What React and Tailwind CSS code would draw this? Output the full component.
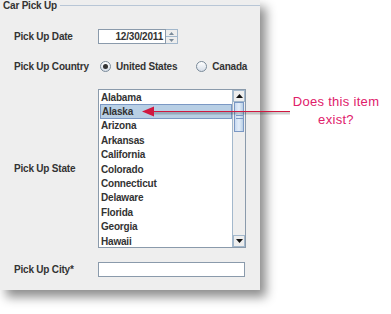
import { useState } from "react";

const states = [
  "Alabama",
  "Alaska",
  "Arizona",
  "Arkansas",
  "California",
  "Colorado",
  "Connecticut",
  "Delaware",
  "Florida",
  "Georgia",
  "Hawaii",
];

function Radio({ checked, label }) {
  return (
    <label className="flex items-center gap-[5px]">
      <span className="w-[11px] h-[11px] rounded-full border border-[#7a8a99] bg-gradient-to-b from-[#ffffff] to-[#d6dee8] flex items-center justify-center">
        {checked && <span className="w-[5px] h-[5px] rounded-full bg-[#333333]" />}
      </span>
      <span>{label}</span>
    </label>
  );
}

function Arrow({ up }) {
  return (
    <div className="h-[12px] flex items-center justify-center border border-[#a3b8cc] bg-[#eeeeee]">
      <svg width="7" height="4" viewBox="0 0 7 4">
        <path d={up ? "M0 4 L3.5 0 L7 4 Z" : "M0 0 L3.5 4 L7 0 Z"} fill="#111" />
      </svg>
    </div>
  );
}

export default function App() {
  const [selected] = useState("Alaska");

  return (
    <div className="relative w-[391px] h-[314px] bg-white overflow-hidden font-['Liberation_Sans',Arial,sans-serif] text-[10px] font-bold tracking-[-0.2px] text-[#333333]">
      <div className="w-[260px] h-[290px] bg-[#eeeeee] shadow-[6px_7px_10px_rgba(0,0,0,0.45)] flex flex-col">
        {/* titled border */}
        <div className="h-[11px] flex items-center pl-[3px] gap-[3px]">
          <span className="text-[#333333]">Car Pick Up</span>
          <div className="flex-1 h-px bg-[#b8c6d6]" />
        </div>

        <div className="pl-[14px] flex flex-col">
          {/* date */}
          <div className="mt-[18px] h-[15px] flex items-center">
            <span className="w-[84px]">Pick Up Date</span>
            <div className="flex h-[15px]">
              <div className="w-[68px] border border-[#8a9aab] bg-white flex items-center justify-end pr-[2px]">
                12/30/2011
              </div>
              <div className="w-[12px] flex flex-col border border-l-0 border-[#a3b8cc]">
                <div className="flex-1 flex items-center justify-center border-b border-[#a3b8cc]">
                  <svg width="5" height="3" viewBox="0 0 5 3"><path d="M0 3 L2.5 0 L5 3 Z" fill="#7a8a99" /></svg>
                </div>
                <div className="flex-1 flex items-center justify-center">
                  <svg width="5" height="3" viewBox="0 0 5 3"><path d="M0 0 L2.5 3 L5 0 Z" fill="#7a8a99" /></svg>
                </div>
              </div>
            </div>
          </div>

          {/* country */}
          <div className="mt-[15px] h-[14px] flex items-center">
            <span className="w-[86px]">Pick Up Country</span>
            <div className="flex items-center gap-[19px]">
              <Radio checked label="United States" />
              <Radio label="Canada" />
            </div>
          </div>

          {/* state list */}
          <div className="mt-[16px] flex items-center">
            <span className="w-[84px]">Pick Up State</span>
            <div className="w-[148px] h-[159px] border border-[#8a9aab] bg-white flex">
              <div className="flex-1 flex flex-col pl-px">
                {states.map((s) => (
                  <div
                    key={s}
                    className={`h-[14.4px] flex items-center pl-px ${
                      s === selected ? "bg-[#b8cfe5] border border-[#7b98c4] pl-0" : ""
                    }`}
                  >
                    {s}
                  </div>
                ))}
              </div>
              <div className="w-[13px] flex flex-col bg-[#eeeeee] border-l border-[#a3b8cc]">
                <Arrow up />
                <div className="flex-1">
                  <div className="h-[30px] mx-px border border-[#7b98c4] bg-gradient-to-r from-[#c8daf0] via-[#e4eefa] to-[#b8cfe5] flex flex-col items-center justify-center gap-[2px]">
                    <div className="w-[7px] h-px bg-[#7b98c4]" />
                    <div className="w-[7px] h-px bg-[#7b98c4]" />
                  </div>
                </div>
                <Arrow />
              </div>
            </div>
          </div>

          {/* city */}
          <div className="mt-[14px] h-[15px] flex items-center">
            <span className="w-[84px]">Pick Up City*</span>
            <div className="w-[147px] h-[15px] border border-[#8a9aab] bg-white" />
          </div>
        </div>
      </div>

      {/* annotation */}
      <svg className="absolute left-[140px] top-[104px]" width="152" height="16" viewBox="0 0 152 16">
        <line x1="10" y1="9" x2="150" y2="9" stroke="#000" strokeOpacity="0.18" strokeWidth="3" />
        <line x1="10" y1="7.5" x2="150" y2="7.5" stroke="#d01840" strokeWidth="1" />
        <path d="M2 7.5 L14 2.5 L14 12.5 Z" fill="#d01840" />
      </svg>
      <div className="absolute left-[291px] top-[93px] w-[90px] text-center whitespace-nowrap font-['Liberation_Sans',sans-serif] font-normal tracking-[0.3px] text-[13px] leading-[18px] text-[#e0206a]">
        Does this item
        <br />
        exist?
      </div>
    </div>
  );
}
